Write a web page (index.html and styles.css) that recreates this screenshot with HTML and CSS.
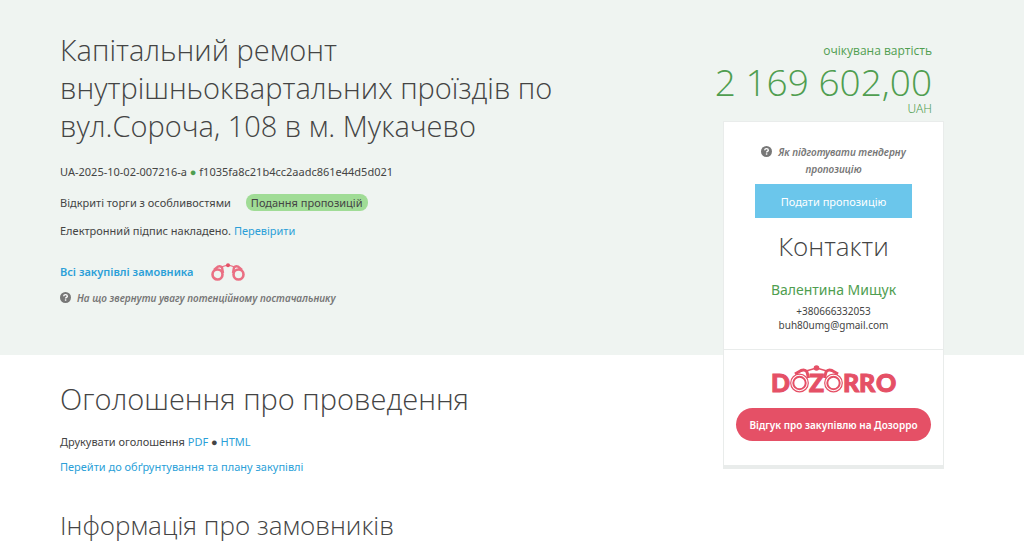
FILE: index.html
```html
<!DOCTYPE html>
<html lang="uk">

<head>
    <meta charset="UTF-8">
    <meta name="viewport" content="width=device-width, initial-scale=1.0">
    <title>Капітальний ремонт внутрішньоквартальних проїздів</title>
    <link rel="stylesheet" href="styles.css">
</head>

<body>
    <!-- shared shapes -->
    <svg class="sprite" aria-hidden="true">
        <symbol id="icon-help" viewBox="0 0 12 12">
            <circle cx="6" cy="6" r="6" fill="#777"/>
            <path d="M4 4.600C4.100 3.300 5 2.800 6 2.800c1.200 0 2 .7 2 1.700 0 1.400-1.900 1.400-1.900 2.700" fill="none" stroke="#fff" stroke-width="1.500"/>
            <rect x="5.300" y="8" width="1.600" height="1.500" fill="#fff"/>
        </symbol>
    </svg>

    <main>
        <section class="tender-header">
            <div class="tender-info">
                <h1>Капітальний ремонт внутрішньоквартальних проїздів по вул.Сороча, 108 в м. Мукачево</h1>
                <p class="tender-id">UA-2025-10-02-007216-a <span class="dot">●</span> f1035fa8c21b4cc2aadc861e44d5d021</p>
                <p class="tender-type">Відкриті торги з особливостями <span class="status">Подання пропозицій</span></p>
                <p>Електронний підпис накладено. <a href="#sign">Перевірити</a></p>
                <div class="customer">
                    <a href="#all">Всі закупівлі замовника</a>
                    <svg class="binoculars" viewBox="0 0 34 18" aria-hidden="true">
                        <g fill="none" stroke="#ea6f83">
                            <circle cx="6.500" cy="11.500" r="5" stroke-width="2.600"/>
                            <circle cx="27.500" cy="11.500" r="5" stroke-width="2.600"/>
                            <path d="M3 7 7 3.500Q9.500 2.500 11 4.500L12 10M31 7 27 3.500Q24.500 2.500 23 4.500L22 10" stroke-width="2.400"/>
                            <path d="M11 3.800 17 2l6 1.800" stroke-width="1.200"/>
                        </g>
                        <circle cx="17" cy="2.300" r="2" fill="#e55066"/>
                    </svg>
                </div>
                <a class="hint" href="#attention"><svg class="help"><use href="#icon-help"/></svg>На що звернути увагу потенційному постачальнику</a>
            </div>
        </section>

        <section class="tender-body">
            <h2>Оголошення про проведення</h2>
            <p>Друкувати оголошення <a href="#pdf">PDF</a> ● <a href="#html">HTML</a></p>
            <p><a href="#plan">Перейти до обґрунтування та плану закупівлі</a></p>
            <h2 class="customers">Інформація про замовників</h2>
        </section>

        <aside>
            <div class="price">
                <div class="price-label">очікувана вартість</div>
                <div class="price-value">2 169 602,00</div>
                <div class="price-currency">UAH</div>
            </div>
            <div class="card">
                <div class="card-contacts">
                    <a class="hint" href="#how"><svg class="help"><use href="#icon-help"/></svg>Як підготувати тендерну пропозицію</a>
                    <button class="btn-bid" type="button">Подати пропозицію</button>
                    <h3>Контакти</h3>
                    <div class="name">Валентина Мищук</div>
                    <div class="contact">+380666332053</div>
                    <div class="contact">buh80umg@gmail.com</div>
                </div>
                <div class="card-dozorro">
                    <svg class="logo" viewBox="0 0 124 28" role="img" aria-label="Dozorro">
                        <g class="logo-text">
                            <text x="-1" y="27">D</text>
                            <text x="37" y="27">Z</text>
                            <text x="71" y="27">R</text>
                            <text x="87" y="27">R</text>
                            <text x="104" y="27">O</text>
                        </g>
                        <g fill="none" stroke="#e55066">
                            <circle cx="27.500" cy="18" r="8.800" stroke-width="1.200"/>
                            <circle cx="27.500" cy="18" r="6.200" stroke-width="2"/>
                            <circle cx="61.500" cy="18" r="8.800" stroke-width="1.200"/>
                            <circle cx="61.500" cy="18" r="6.200" stroke-width="2"/>
                            <path d="M23 9 29 5.500Q33 4 35 7L36.500 13M66 9 60 5.500Q56 4 54 7L52.500 13" stroke-width="3"/>
                            <path d="M34 6 44.500 3 55 6" stroke-width="1.500"/>
                        </g>
                        <circle cx="44.500" cy="3" r="2.800" fill="#e55066"/>
                    </svg>
                    <button class="btn-review" type="button">Відгук про закупівлю на Дозорро</button>
                </div>
            </div>
        </aside>
    </main>
</body>

</html>
```
FILE: styles.css
```css
* {
    box-sizing: border-box;
    padding: 0;
    margin: 0;
}

body {
    font-family: "Noto Sans", "Open Sans", sans-serif;
    font-size: 11px;
    line-height: 18px;
    color: #444;
    background: #fff;
}

a {
    color: #2b9fd8;
    text-decoration: none;
}

button {
    font-family: inherit;
    border: none;
    cursor: pointer;
}

h1,
h2,
h3 {
    font-family: "Open Sans", sans-serif;
    font-weight: 300;
    color: #444;
}

h1 {
    font-size: 29px;
    line-height: 38px;
    margin-bottom: 18px;
}

h2 {
    font-size: 29px;
    line-height: 38px;
}

main {
    position: relative;
}

.sprite {
    display: none;
}

.tender-header {
    background: #eff4f1;
    padding: 31px 360px 48px 60px;
}

.tender-id {
    margin-bottom: 13px;
}

.dot {
    color: #4f9e50;
}

.tender-type {
    margin-bottom: 10px;
}

.status {
    display: inline-block;
    margin-left: 12px;
    padding: 0 5px;
    line-height: 17px;
    border-radius: 8px;
    background: #a0dc96;
}

.customer {
    display: flex;
    align-items: center;
    gap: 18px;
    margin: 23px 0 8px;
    font-weight: 600;
}

.binoculars {
    width: 34px;
    height: 18px;
}

.hint {
    font-size: 10px;
    font-style: italic;
    font-weight: 600;
    line-height: 17px;
    color: #777;
}

.help {
    width: 11px;
    height: 11px;
    margin-right: 6px;
    vertical-align: -1px;
}

.tender-body {
    padding: 25px 360px 0 60px;
}

.tender-body h2 {
    margin-bottom: 15px;
}

.tender-body p {
    margin-bottom: 7px;
}

.tender-body .customers {
    margin-top: 30px;
    font-size: 26px;
}

/* the aside overlaps both the header and the body */
aside {
    position: absolute;
    top: 42px;
    right: 80px;
    width: 221px;
}

.price {
    padding-right: 12px;
    text-align: right;
    color: #4f9e50;
    white-space: nowrap;
}

.price-label {
    font-family: "Open Sans", sans-serif;
    font-size: 11px;
}

.price-label,
.price-currency {
    font-size: 12px;
}

.price-value {
    display: flex;
    justify-content: flex-end;
    font-family: "Open Sans", sans-serif;
    font-size: 37px;
    font-weight: 300;
    line-height: 44px;
}

.price-currency {
    font-weight: 300;
    line-height: 10px;
}

.card {
    margin-top: 7px;
    border: 1px solid #e9eceb;
    border-bottom: 4px solid #e9eceb;
    background: #fff;
    text-align: center;
}

.card-contacts {
    padding: 22px 31px 17px;
    border-bottom: 1px solid #e9eceb;
}

.card .hint {
    display: block;
}

.btn-bid {
    display: block;
    width: 100%;
    height: 34px;
    margin-top: 6px;
    background: #6bc6eb;
    color: #fff;
    font-size: 11px;
}

h3 {
    margin: 11px 0 17px;
    font-size: 26px;
    line-height: 34px;
}

.name {
    margin-bottom: 4px;
    font-size: 14px;
    line-height: 20px;
    color: #4f9e50;
}

.contact {
    font-size: 10px;
    line-height: 14px;
}

.card-dozorro {
    padding: 15px 12px 24px;
}

.logo {
    display: block;
    width: 124px;
    height: 28px;
    margin: 0 auto;
    overflow: visible;
}

.logo-text {
    font-family: Lato, sans-serif;
    font-size: 25px;
    font-weight: 900;
    fill: #e55066;
    stroke: #e55066;
    stroke-width: 1px;
}

.btn-review {
    display: block;
    width: 100%;
    height: 33px;
    margin-top: 15px;
    border-radius: 17px;
    background: #e55066;
    color: #fff;
    font-size: 10px;
    font-weight: 600;
}
```
